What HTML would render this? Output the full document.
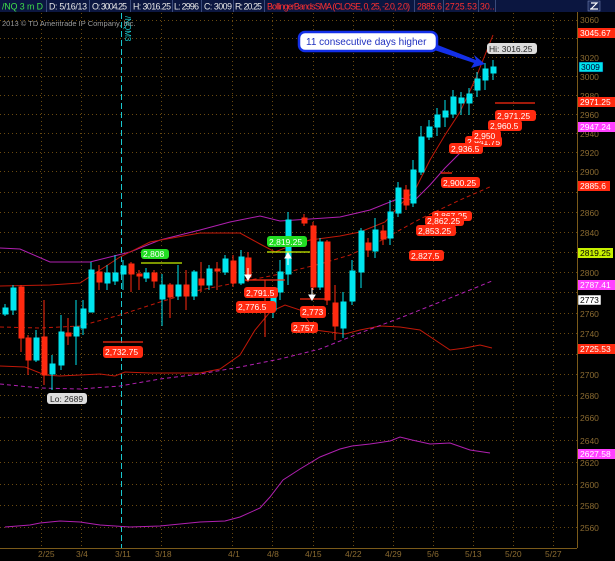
<!DOCTYPE html>
<html><head><meta charset="utf-8"><style>
html,body{margin:0;padding:0;background:#000;}
body{width:615px;height:561px;overflow:hidden;font-family:"Liberation Sans",sans-serif;}
svg{display:block}
</style></head><body>
<svg width="615" height="561" viewBox="0 0 615 561" xmlns="http://www.w3.org/2000/svg" font-family="Liberation Sans, sans-serif">
<rect width="615" height="561" fill="#000"/>
<!-- header -->
<rect x="0" y="0" width="615" height="12" fill="#0b1640"/>
<g stroke="#3a4a7a" stroke-width="1">
<line x1="46.5" y1="0" x2="46.5" y2="12"/><line x1="89.5" y1="0" x2="89.5" y2="12"/><line x1="130.5" y1="0" x2="130.5" y2="12"/><line x1="172.5" y1="0" x2="172.5" y2="12"/><line x1="201.5" y1="0" x2="201.5" y2="12"/><line x1="233.5" y1="0" x2="233.5" y2="12"/><line x1="264.5" y1="0" x2="264.5" y2="12"/><line x1="414.5" y1="0" x2="414.5" y2="12"/><line x1="443.5" y1="0" x2="443.5" y2="12"/><line x1="478.5" y1="0" x2="478.5" y2="12"/><line x1="495.5" y1="0" x2="495.5" y2="12"/>
</g>
<g font-size="8.8" fill="#e8e8e8">
<text x="2" y="9.5" fill="#3fe04a" textLength="41">/NQ 3 m D</text>
<text x="49" y="9.5" textLength="38">D: 5/16/13</text>
<text x="92" y="9.5" textLength="35">O: 3004.25</text>
<text x="133" y="9.5" textLength="38">H: 3016.25</text>
<text x="174" y="9.5" textLength="25">L: 2996</text>
<text x="204" y="9.5" textLength="28">C: 3009</text>
<text x="235" y="9.5" textLength="27">R: 20.25</text>
<text x="267" y="9.5" fill="#ff3030" textLength="143">BollingerBandsSMA (CLOSE, 0, 25, -2.0, 2.0)</text>
<text x="417" y="9.5" fill="#ff3030" textLength="25">2885.6</text>
<text x="445" y="9.5" fill="#ff3030" textLength="32">2725.53</text>
<text x="480" y="9.5" fill="#ff3030">30..</text>
</g>
<rect x="588" y="1" width="12" height="10" fill="#1c2a5a" stroke="#8090c0" stroke-width="0.5"/>
<path d="M590 9 L598 9 M591 3 L597 3 L591 9" stroke="#fff" stroke-width="1.2" fill="none"/>

<!-- grid -->
<g stroke="#6a4a10" stroke-width="1" stroke-dasharray="1,3">
<line x1="0" y1="20.5" x2="577" y2="20.5"/><line x1="0" y1="38.5" x2="577" y2="38.5"/><line x1="0" y1="57.5" x2="577" y2="57.5"/><line x1="0" y1="76.5" x2="577" y2="76.5"/><line x1="0" y1="95.5" x2="577" y2="95.5"/><line x1="0" y1="114.5" x2="577" y2="114.5"/><line x1="0" y1="133.5" x2="577" y2="133.5"/><line x1="0" y1="152.5" x2="577" y2="152.5"/><line x1="0" y1="171.5" x2="577" y2="171.5"/><line x1="0" y1="192.5" x2="577" y2="192.5"/><line x1="0" y1="212.5" x2="577" y2="212.5"/><line x1="0" y1="232.5" x2="577" y2="232.5"/><line x1="0" y1="252.5" x2="577" y2="252.5"/><line x1="0" y1="272.5" x2="577" y2="272.5"/><line x1="0" y1="292.5" x2="577" y2="292.5"/><line x1="0" y1="313.5" x2="577" y2="313.5"/><line x1="0" y1="333.5" x2="577" y2="333.5"/><line x1="0" y1="354.5" x2="577" y2="354.5"/><line x1="0" y1="374.5" x2="577" y2="374.5"/><line x1="0" y1="395.5" x2="577" y2="395.5"/><line x1="0" y1="417.5" x2="577" y2="417.5"/><line x1="0" y1="440.5" x2="577" y2="440.5"/><line x1="0" y1="462.5" x2="577" y2="462.5"/><line x1="0" y1="484.5" x2="577" y2="484.5"/><line x1="0" y1="505.5" x2="577" y2="505.5"/><line x1="0" y1="527.5" x2="577" y2="527.5"/>
<line x1="41.5" y1="13" x2="41.5" y2="548"/><line x1="81.5" y1="13" x2="81.5" y2="548"/><line x1="161.5" y1="13" x2="161.5" y2="548"/><line x1="232.5" y1="13" x2="232.5" y2="548"/><line x1="272.5" y1="13" x2="272.5" y2="548"/><line x1="313.5" y1="13" x2="313.5" y2="548"/><line x1="353.5" y1="13" x2="353.5" y2="548"/><line x1="393.5" y1="13" x2="393.5" y2="548"/><line x1="433.5" y1="13" x2="433.5" y2="548"/><line x1="473.5" y1="13" x2="473.5" y2="548"/><line x1="513.5" y1="13" x2="513.5" y2="548"/><line x1="553.5" y1="13" x2="553.5" y2="548"/>
</g>
<line x1="577.5" y1="12" x2="577.5" y2="548" stroke="#7a5a1a"/>
<line x1="0" y1="548.5" x2="577" y2="548.5" stroke="#7a5a1a"/>
<rect x="0" y="549" width="615" height="12" fill="#000"/>
<line x1="121.5" y1="13" x2="121.5" y2="548" stroke="#19c8d0" stroke-dasharray="6,3"/>
<text x="125" y="16" font-size="8" fill="#19c8d0" transform="rotate(90 125 16)">/NQM3</text>
<text x="2" y="26" font-size="7.5" fill="#9a9a9a">2013 © TD Ameritrade IP Company, Inc.</text>

<!-- axis labels -->
<g font-size="8.5" fill="#8a6a30">
<text x="580" y="23">3060</text><text x="580" y="61">3020</text><text x="580" y="80">3000</text><text x="580" y="99">2980</text><text x="580" y="118">2960</text><text x="580" y="137">2940</text><text x="580" y="156">2920</text><text x="580" y="175">2900</text><text x="580" y="216">2860</text><text x="580" y="236">2840</text><text x="580" y="276">2800</text><text x="580" y="317">2760</text><text x="580" y="337">2740</text><text x="580" y="378">2700</text><text x="580" y="399">2680</text><text x="580" y="421">2660</text><text x="580" y="444">2640</text><text x="580" y="466">2620</text><text x="580" y="488">2600</text><text x="580" y="509">2580</text><text x="580" y="531">2560</text>
<text x="38" y="557">2/25</text><text x="76" y="557">3/4</text><text x="115" y="557">3/11</text><text x="155" y="557">3/18</text><text x="228" y="557">4/1</text><text x="267" y="557">4/8</text><text x="305" y="557">4/15</text><text x="345" y="557">4/22</text><text x="385" y="557">4/29</text><text x="427" y="557">5/6</text><text x="465" y="557">5/13</text><text x="505" y="557">5/20</text><text x="545" y="557">5/27</text>
</g>
<g font-size="8.5" fill="#fff">
<rect x="578" y="28" width="37" height="10" fill="#ff2a10"/><text x="580" y="36">3045.67</text>
<rect x="579" y="62" width="24" height="10" fill="#00e5ee" stroke="#004" stroke-width="0.5"/><text x="581" y="70" fill="#003">3009</text>
<rect x="578" y="97" width="37" height="10" fill="#ff2a10"/><text x="580" y="105">2971.25</text>
<rect x="578" y="122" width="37" height="10" fill="#ff40ff"/><text x="580" y="130">2947.24</text>
<rect x="578" y="181" width="32" height="10" fill="#ff2a10"/><text x="580" y="189">2885.6</text>
<rect x="578" y="248" width="35" height="10" fill="#c8f000"/><text x="580" y="256" fill="#000">2819.25</text>
<rect x="578" y="280" width="37" height="10" fill="#ff40ff"/><text x="580" y="288">2787.41</text>
<rect x="578" y="295" width="23" height="10" fill="#fff" stroke="#000" stroke-width="0.5"/><text x="580" y="303" fill="#000">2773</text>
<rect x="578" y="344" width="37" height="10" fill="#ff2a10"/><text x="580" y="352">2725.53</text>
<rect x="578" y="449" width="37" height="10" fill="#ff40ff"/><text x="580" y="457">2627.58</text>
</g>

<!-- bands -->
<g fill="none" stroke-width="1">
<polyline stroke="#b020b0" points="0,248 20,249 50,262 90,262 130,252 160,240 200,230 230,222 260,216 280,221 310,219 340,217 370,210 400,198 415,200 430,185 445,168 460,153 468,143"/>
<polyline stroke="#c01808" points="0,286 50,285 80,283 100,270 120,257 150,242 200,233 240,233 260,244 275,252 290,246 310,240 340,236 360,232 385,222 400,205 415,190 430,160 445,135 460,112 475,80 493,35"/>
<polyline stroke="#c01808" points="0,366 25,367 45,375 60,376 100,374 115,376 125,372 150,373 200,373 220,369 240,355 255,330 270,312 285,305 300,310 315,330 330,332 345,334 360,330 380,326 400,327 420,330 435,340 450,350 465,348 480,345 492,348"/>
<polyline stroke="#c01808" stroke-dasharray="4,3" points="0,327 40,328 80,326 120,315 160,302 200,290 240,282 280,274 320,264 350,255 380,241 420,219 460,200 492,186"/>
<polyline stroke="#b020b0" stroke-dasharray="4,3" points="0,384 40,388 80,389 120,386 160,379 200,374 240,367 280,359 320,349 360,333 400,318 440,302 470,290 492,281"/>
<polyline stroke="#b020b0" points="5,527 30,525 40,523 60,521 80,522 100,525 130,527 160,526 200,522 225,521 240,517 260,508 270,497 283,480 300,469 320,457 340,449 352,446 370,444 390,441 400,437 412,440 430,444 450,443 470,450 490,453"/>
</g>

<!-- candles -->
<g stroke-width="1">
<g stroke="#00e5ee" fill="#00e5ee">
<line x1="5" y1="304" x2="5" y2="316"/><rect x="3" y="308" width="5" height="6"/>
<line x1="13" y1="285" x2="13" y2="315"/><rect x="11" y="288" width="5" height="22"/>
<line x1="36" y1="330" x2="36" y2="362"/><rect x="34" y="338" width="5" height="22"/>
<line x1="52" y1="355" x2="52" y2="390"/><rect x="50" y="364" width="5" height="10"/>
<line x1="61" y1="315" x2="61" y2="370"/><rect x="59" y="332" width="5" height="33"/>
<line x1="76" y1="300" x2="76" y2="365"/><rect x="74" y="327" width="5" height="9"/>
<line x1="83" y1="300" x2="83" y2="335"/><rect x="81" y="309" width="5" height="19"/>
<line x1="91" y1="262" x2="91" y2="312"/><rect x="89" y="270" width="5" height="42"/>
<line x1="107" y1="265" x2="107" y2="290"/><rect x="105" y="273" width="5" height="10"/>
<line x1="115" y1="255" x2="115" y2="285"/><rect x="113" y="273" width="5" height="8"/>
<line x1="123" y1="260" x2="123" y2="290"/><rect x="121" y="266" width="5" height="8"/>
<line x1="146" y1="268" x2="146" y2="282"/><rect x="144" y="273" width="5" height="5"/>
<line x1="162" y1="274" x2="162" y2="326"/><rect x="160" y="285" width="5" height="14"/>
<line x1="178" y1="265" x2="178" y2="300"/><rect x="176" y="285" width="5" height="11"/>
<line x1="194" y1="270" x2="194" y2="300"/><rect x="192" y="272" width="5" height="24"/>
<line x1="209" y1="265" x2="209" y2="290"/><rect x="207" y="269" width="5" height="16"/>
<line x1="225" y1="255" x2="225" y2="275"/><rect x="223" y="259" width="5" height="13"/>
<line x1="241" y1="250" x2="241" y2="285"/><rect x="239" y="257" width="5" height="26"/>
<line x1="273" y1="290" x2="273" y2="318"/><rect x="271" y="297" width="5" height="13"/>
<line x1="280" y1="260" x2="280" y2="300"/><rect x="278" y="272" width="5" height="20"/>
<line x1="288" y1="212" x2="288" y2="285"/><rect x="286" y="220" width="5" height="54"/>
<line x1="320" y1="238" x2="320" y2="290"/><rect x="318" y="242" width="5" height="45"/>
<line x1="343" y1="292" x2="343" y2="338"/><rect x="341" y="302" width="5" height="26"/>
<line x1="352" y1="260" x2="352" y2="305"/><rect x="350" y="271" width="5" height="30"/>
<line x1="361" y1="228" x2="361" y2="288"/><rect x="359" y="231" width="5" height="41"/>
<line x1="375" y1="218" x2="375" y2="258"/><rect x="373" y="230" width="5" height="21"/>
<line x1="390" y1="200" x2="390" y2="245"/><rect x="388" y="212" width="5" height="26"/>
<line x1="398" y1="182" x2="398" y2="217"/><rect x="396" y="188" width="5" height="25"/>
<line x1="413" y1="160" x2="413" y2="207"/><rect x="411" y="170" width="5" height="33"/>
<line x1="421" y1="126" x2="421" y2="175"/><rect x="419" y="137" width="5" height="35"/>
<line x1="429" y1="120" x2="429" y2="140"/><rect x="427" y="127" width="5" height="10"/>
<line x1="437" y1="108" x2="437" y2="136"/><rect x="435" y="115" width="5" height="12"/>
<line x1="445" y1="100" x2="445" y2="127"/><rect x="443" y="111" width="5" height="6"/>
<line x1="453" y1="90" x2="453" y2="118"/><rect x="451" y="97" width="5" height="17"/>
<line x1="461" y1="92" x2="461" y2="115"/><rect x="459" y="98" width="5" height="5"/>
<line x1="469" y1="88" x2="469" y2="115"/><rect x="467" y="94" width="5" height="9"/>
<line x1="477" y1="72" x2="477" y2="97"/><rect x="475" y="79" width="5" height="11"/>
<line x1="485" y1="63" x2="485" y2="90"/><rect x="483" y="69" width="5" height="11"/>
<line x1="493" y1="60" x2="493" y2="80"/><rect x="491" y="67" width="5" height="6"/>
</g>
<g stroke="#ff2a10" fill="#ff2a10">
<line x1="21" y1="285" x2="21" y2="352"/><rect x="19" y="287" width="5" height="51"/>
<line x1="28" y1="335" x2="28" y2="375"/><rect x="26" y="338" width="5" height="22"/>
<line x1="44" y1="300" x2="44" y2="385"/><rect x="42" y="337" width="5" height="38"/>
<line x1="68" y1="318" x2="68" y2="345"/><rect x="66" y="333" width="5" height="3"/>
<line x1="99" y1="265" x2="99" y2="290"/><rect x="97" y="272" width="5" height="10"/>
<line x1="131" y1="262" x2="131" y2="292"/><rect x="129" y="264" width="5" height="10"/>
<line x1="139" y1="270" x2="139" y2="290"/><rect x="137" y="274" width="5" height="2"/>
<line x1="154" y1="270" x2="154" y2="288"/><rect x="152" y="273" width="5" height="8"/>
<line x1="170" y1="283" x2="170" y2="318"/><rect x="168" y="285" width="5" height="12"/>
<line x1="186" y1="270" x2="186" y2="310"/><rect x="184" y="285" width="5" height="11"/>
<line x1="201" y1="262" x2="201" y2="292"/><rect x="199" y="279" width="5" height="6"/>
<line x1="217" y1="262" x2="217" y2="290"/><rect x="215" y="269" width="5" height="2"/>
<line x1="233" y1="255" x2="233" y2="287"/><rect x="231" y="261" width="5" height="22"/>
<line x1="248" y1="252" x2="248" y2="282"/><rect x="246" y="258" width="5" height="19"/>
<line x1="265" y1="280" x2="265" y2="337"/>
<line x1="304" y1="214" x2="304" y2="226"/><rect x="302" y="218" width="5" height="5"/>
<line x1="313" y1="222" x2="313" y2="290"/><rect x="311" y="226" width="5" height="61"/>
<line x1="327" y1="240" x2="327" y2="305"/><rect x="325" y="242" width="5" height="58"/>
<line x1="335" y1="285" x2="335" y2="340"/><rect x="333" y="303" width="5" height="23"/>
<line x1="368" y1="238" x2="368" y2="257"/><rect x="366" y="243" width="5" height="7"/>
<line x1="383" y1="225" x2="383" y2="245"/><rect x="381" y="231" width="5" height="8"/>
<line x1="406" y1="185" x2="406" y2="210"/><rect x="404" y="190" width="5" height="15"/>
</g>
</g>

<!-- price lines -->
<g stroke-width="1.3">
<line x1="103" y1="342" x2="143" y2="342" stroke="#ff2a10"/>
<line x1="141" y1="263" x2="182" y2="263" stroke="#c8f000"/>
<line x1="267" y1="252" x2="310" y2="252" stroke="#c8f000"/>
<line x1="245" y1="280" x2="285" y2="280" stroke="#ff2a10"/>
<line x1="300" y1="299" x2="330" y2="299" stroke="#ff2a10"/>
<line x1="495" y1="103" x2="535" y2="103" stroke="#ff2a10"/>
<line x1="441" y1="173" x2="452" y2="173" stroke="#ff2a10"/>
</g>
<!-- arrows white -->
<g stroke="#fff" fill="#fff">
<line x1="248" y1="268" x2="248" y2="278"/><path d="M245 275 L251 275 L248 280Z"/>
<line x1="312" y1="288" x2="312" y2="298"/><path d="M309 295 L315 295 L312 300Z"/>
<line x1="288" y1="255" x2="288" y2="265"/><path d="M285 258 L291 258 L288 253Z"/>
</g>

<!-- bubble labels -->
<g font-size="8.5" fill="#fff">
<rect x="103" y="346" width="40" height="12" rx="3" fill="#ff2a10"/><text x="105" y="355">2,732.75</text>
<rect x="244" y="287" width="34" height="11" rx="3" fill="#ff2a10"/><text x="246" y="296">2,791.5</text>
<rect x="236" y="301" width="40" height="12" rx="3" fill="#ff2a10"/><text x="238" y="310">2,776.5</text>
<rect x="300" y="306" width="26" height="12" rx="3" fill="#ff2a10"/><text x="302" y="315">2,773</text>
<rect x="291" y="322" width="27" height="11" rx="3" fill="#ff2a10"/><text x="293" y="331">2,757</text>
<rect x="409" y="250" width="35" height="11" rx="3" fill="#ff2a10"/><text x="411" y="259">2,827.5</text>
<rect x="432" y="211" width="40" height="10" rx="3" fill="#ff2a10"/><text x="434" y="219">2,867.25</text>
<rect x="425" y="216" width="39" height="10" rx="3" fill="#ff2a10"/><text x="427" y="224">2,862.25</text>
<rect x="416" y="225" width="40" height="11" rx="3" fill="#ff2a10"/><text x="418" y="234">2,853.25</text>
<rect x="441" y="177" width="39" height="11" rx="3" fill="#ff2a10"/><text x="443" y="186">2,900.25</text>
<rect x="465" y="136" width="37" height="11" rx="3" fill="#ff2a10"/><text x="467" y="145">2,941.75</text>
<rect x="472" y="130" width="29" height="11" rx="3" fill="#ff2a10"/><text x="474" y="139">2,950</text>
<rect x="449" y="143" width="34" height="11" rx="3" fill="#ff2a10"/><text x="451" y="152">2,936.5</text>
<rect x="488" y="120" width="34" height="11" rx="3" fill="#ff2a10"/><text x="490" y="129">2,960.5</text>
<rect x="495" y="110" width="41" height="11" rx="3" fill="#ff2a10"/><text x="497" y="119">2,971.25</text>
<rect x="141" y="249" width="28" height="10" rx="3" fill="#22dd22"/><text x="143" y="257">2,808</text>
<rect x="267" y="236" width="40" height="11" rx="3" fill="#22dd22"/><text x="269" y="245">2,819.25</text>
</g>
<rect x="487" y="43" width="50" height="11" rx="3" fill="#ddd"/><text x="489" y="52" font-size="8.5" fill="#222">Hi: 3016.25</text>
<rect x="47" y="393" width="40" height="11" rx="3" fill="#ddd"/><text x="50" y="402" font-size="8.5" fill="#222">Lo: 2689</text>

<!-- callout -->
<path d="M430 42 L476 60 L474 55 L485 64 L471 68 L474 63 L428 48 Z" fill="#1430e8"/>
<rect x="299" y="32" width="138" height="19" rx="6" fill="#fff" stroke="#1430e8" stroke-width="2.5"/>
<text x="306" y="45" font-size="10" fill="#2030c0">11 consecutive days higher</text>
</svg>
</body></html>
